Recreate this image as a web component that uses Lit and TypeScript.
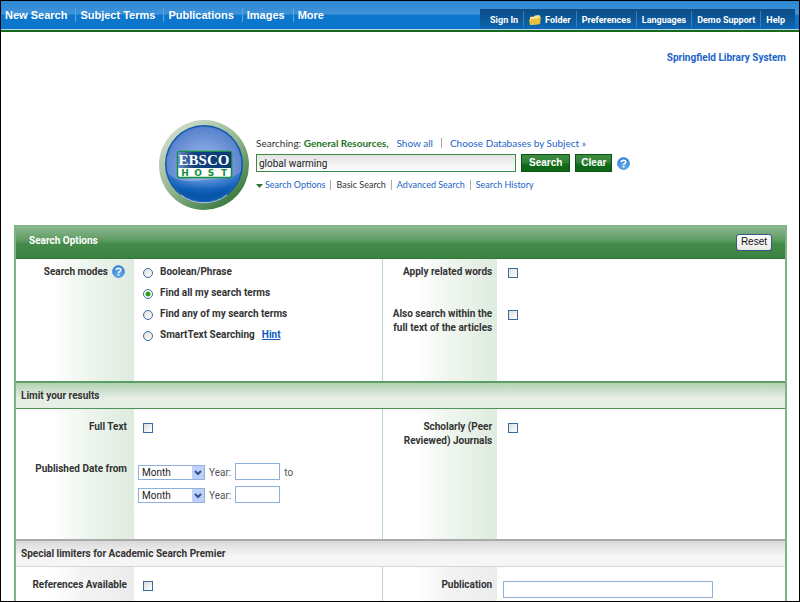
import { LitElement, html, css, svg } from "lit";
import { customElement, property } from "lit/decorators.js";

@customElement("help-icon")
class HelpIcon extends LitElement {
  static styles = css`
    :host { display: inline-flex; }
    svg { display: block; width: 13px; height: 13px; }
  `;
  render() {
    return html`<svg viewBox="0 0 13 13" role="img" aria-label="Help">
      <defs>
        <radialGradient id="g" cx="50%" cy="70%" r="70%">
          <stop offset="0" stop-color="#6db4f2" />
          <stop offset="1" stop-color="#2f78cf" />
        </radialGradient>
      </defs>
      <circle cx="6.5" cy="6.5" r="6" fill="url(#g)" stroke="#5a9be0" />
      <path d="M4.3 5 C4.3 2.6 8.8 2.6 8.8 4.9 C8.8 6.3 6.6 6.3 6.6 8.1" fill="none" stroke="#fff" stroke-width="1.6" />
      <rect x="5.8" y="9" width="1.6" height="1.6" fill="#fff" />
    </svg>`;
  }
}

@customElement("month-year")
class MonthYear extends LitElement {
  @property() which = "from";
  static styles = css`
    :host { display: flex; align-items: flex-end; gap: 4px; font: 10px/14px Roboto, "DejaVu Sans", sans-serif; color: #555; height: 17px; }
    .pick { position: relative; display: flex; }
    select { appearance: none; box-sizing: border-box; width: 67px; height: 15px; margin: 0; padding: 0 16px 0 3px; border: 1px solid #8fb0d8; border-radius: 0; background: #fff; color: #222; font: inherit; line-height: 13px; }
    .arrow { position: absolute; right: 1px; top: 1px; width: 12px; height: 13px; pointer-events: none; }
    input { box-sizing: border-box; width: 45px; height: 17px; margin: 0; padding: 0 2px; border: 1px solid #8fb0d8; background: #fff; font: inherit; }
    .pair { display: flex; align-items: flex-end; gap: 4px; }
  `;
  render() {
    return html`
      <span class="pick">
        <select aria-label="Month ${this.which}"><option>Month</option></select>
        <svg class="arrow" viewBox="0 0 12 13" aria-hidden="true">
          <rect width="12" height="13" rx="1" fill="#bdd0fa" />
          <path d="M3 5 L6 8 L9 5" fill="none" stroke="#33508c" stroke-width="2" />
        </svg>
      </span>
      <label class="pair">Year: <input type="text" /></label>
      <slot></slot>
    `;
  }
}

@customElement("ebsco-logo")
class EbscoLogo extends LitElement {
  static styles = css`
    :host { display: block; flex: none; }
    svg { display: block; width: 90px; height: 90px; }
    .name { font: bold 15px "Liberation Serif", serif; fill: #fff; }
    .host { font: bold 9px "DejaVu Sans", sans-serif; fill: #12913f; }
  `;
  render() {
    return html`<svg viewBox="0 0 90 90" role="img" aria-label="EBSCOhost">
      <defs>
        <linearGradient id="ring" x1="0.15" y1="0.05" x2="0.85" y2="0.95">
          <stop offset="0" stop-color="#d3dfcf" />
          <stop offset="0.5" stop-color="#93b58f" />
          <stop offset="1" stop-color="#2f7437" />
        </linearGradient>
        <radialGradient id="ball" cx="50%" cy="56%" r="56%">
          <stop offset="0" stop-color="#9fbdea" />
          <stop offset="0.55" stop-color="#7c9fdc" />
          <stop offset="1" stop-color="#5580cc" />
        </radialGradient>
        <radialGradient id="deep" cx="50%" cy="0%" r="75%">
          <stop offset="0" stop-color="#8fb2e8" />
          <stop offset="0.45" stop-color="#4f88d4" />
          <stop offset="0.8" stop-color="#1463bb" />
          <stop offset="1" stop-color="#0757ab" />
        </radialGradient>
        <linearGradient id="plate" x1="0" y1="0" x2="1" y2="0">
          <stop offset="0" stop-color="#6f90c4" />
          <stop offset="0.3" stop-color="#11407f" />
          <stop offset="1" stop-color="#0b3975" />
        </linearGradient>
      </defs>
      <circle cx="45" cy="45" r="45" fill="url(#ring)" />
      <circle cx="45" cy="44" r="39" fill="#0d57ab" />
      <circle cx="45" cy="44" r="37.500" fill="url(#ball)" />
      <path d="M8.500 53 C18 62 30 62 44 60 C60 58 74 60 81.500 52 A37.500 37.500 0 0 1 8.500 53 Z" fill="url(#deep)" />
      <path d="M22 75 A38 38 0 0 0 68 75" fill="none" stroke="#a9c6ec" />
      <rect x="18.500" y="31.500" width="54" height="26" rx="2" fill="#fff" stroke="#12913f" stroke-width="1.500" />
      <rect x="19" y="32" width="53" height="16" fill="url(#plate)" />
      <text class="name" x="45" y="45" text-anchor="middle">EBSCO</text>
      ${["H", "O", "S", "T"].map(
        (c, i) => svg`<text class="host" x=${26 + i * 13} y="56" text-anchor="middle">${c}</text>`,
      )}
    </svg>`;
  }
}

@customElement("app-root")
class AppRoot extends LitElement {
  static styles = css`
    :host {
      display: flex; flex-direction: column; box-sizing: border-box; height: 100vh; overflow: hidden;
      border: 1px solid #000; background: #fff; color: #333;
      font: 10px/14px Roboto, "DejaVu Sans", sans-serif;
    }
    a { color: #1c64c8; text-decoration: none; }
    input, button { margin: 0; }

    .top { flex: none; display: flex; justify-content: space-between; height: 28px; border-bottom: 1px solid #b9d5ea; box-shadow: 0 2px 0 #146a1a; background: linear-gradient(#2d86d2 0, #3f94da 13px, #0d76cd 14px, #0b74cb 100%); }
    .menu, .tools { display: flex; align-items: center; margin: 0; padding: 0; list-style: none; }
    .menu { height: 28px; font: bold 11px/14px "Liberation Sans", Arial, sans-serif; }
    .menu li { padding: 0 8px 0 4px; border-left: 1px solid #5ba5de; }
    .menu li:first-child, .tools li:first-child { border-left: 0; }
    .menu a, .tools a { color: #fff; }
    .tools { align-self: flex-end; height: 20px; margin-right: 4px; padding: 0 5px; background: linear-gradient(#0a4c86, #0c5a9c 60%, #1068b4); font-size: 9px; font-weight: bold; }
    .tools li { padding: 2px 5px 0; border-left: 1px solid #3a7db8; }
    .tools a { display: flex; align-items: center; gap: 4px; }
    .folder { width: 12px; height: 10px; }

    .org { flex: none; display: flex; justify-content: flex-end; padding: 21px 13px 0; font-weight: bold; }
    .finder { flex: none; display: flex; gap: 7px; padding: 55px 0 0 158px; }
    .form { padding-top: 16px; }
    .line { display: flex; align-items: center; font-family: Lato, Roboto, sans-serif; }
    .line > * + * { margin-left: 8px; }
    .bar { width: 1px; height: 10px; background: #aaa; }
    .source { color: #1d7422; font-weight: bold; }
    .query { display: flex; align-items: center; gap: 5px; padding-top: 4px; }
    .query input { box-sizing: border-box; width: 260px; height: 18px; padding: 0 2px; border: 1px solid #3d8a45; border-radius: 0; background: linear-gradient(#e2e2e2, #fff); color: #222; font: inherit; }
    .green { height: 18px; padding: 0 7px; border: 1px solid #0a5410; border-radius: 0; background: linear-gradient(#3f8c45 0, #2c7f33 8px, #0f6d18 9px, #0d6416 100%); color: #fff; font: bold 10px/14px "Liberation Sans", Arial, sans-serif; }
    .green.clear { padding: 0 5px; }
    .modes { padding-top: 6px; font-size: 9px; }
    .line.modes > * + * { margin-left: 5px; }
    .caret { width: 7px; height: 4px; margin-right: 2px; }
    .current { color: #333; }

    .panel { flex: 1 0 auto; display: flex; flex-direction: column; margin: 15px 12px 0 13px; border: solid #7db483; border-width: 1px 2px 0; font-weight: bold; }
    h1, h2 { margin: 0; font: inherit; }
    h1 { padding-bottom: 3px; }
    .title { display: flex; align-items: center; justify-content: space-between; height: 32px; padding: 0 13px; border-bottom: 1px solid #2c7a35; background: linear-gradient(#8fba92 0, #5e9b62 14px, #448b4a 18px, #3c8343 100%); color: #fff; }
    .reset { height: 17px; padding: 0 4px; border: 1px solid #34588e; border-radius: 3px; background: linear-gradient(#fff, #ecebe5); color: #111; font: 10px/14px "Liberation Sans", Arial, sans-serif; }
    .sub { height: 25px; padding-left: 5px; border: solid #4e9457; border-width: 2px 0 1px; border-top-color: #5c9f64; background: linear-gradient(#b2d2b4, #e6eee6 60%); line-height: 26px; }
    .sub.gray { border-color: #aaa #ccc #d5d5d5; background: linear-gradient(#d9d9d9, #f6f6f6 60%); }
    .pair { display: grid; grid-template-columns: 10fr 11fr; }
    .fill { flex: 1; }
    .half { display: grid; grid-template-columns: 118px 1fr; grid-auto-rows: max-content; row-gap: 28px; padding: 6px 0 39px; background: linear-gradient(90deg, #fff 30%, #eff6ef 58%, #deebdf) no-repeat 0 0 / 118px 100%; }
    .half.right { grid-template-columns: 114px 1fr; background-size: 114px 100%; border-left: 1px solid #b9dcbb; }
    .limits .half { padding: 11px 0 36px; }
    .fill .half { padding: 11px 0 0; background-image: linear-gradient(90deg, #fff 30%, #f3f3f3 58%, #ececec); }
    .fill .half.right { border-left-color: #ccc; }
    .name { display: flex; justify-content: flex-end; align-items: flex-start; gap: 4px; padding-right: 7px; text-align: right; }
    .right .name { padding-right: 5px; white-space: nowrap; }
    .name.helped { padding-right: 9px; }
    .field { display: flex; align-items: flex-start; padding: 3px 0 0 9px; }
    .right .field { padding-left: 11px; }
    .choices { display: grid; gap: 7px; padding: 0 0 0 9px; }
    .choice { display: flex; gap: 7px; }
    .dates { display: grid; gap: 6px; padding: 1px 0 0 4px; }
    input[type="radio"], input[type="checkbox"] { appearance: none; box-sizing: border-box; flex: none; width: 10px; height: 10px; border: 1px solid #3d6a9c; background: linear-gradient(135deg, #ddd, #fff); }
    input[type="radio"] { border-radius: 50%; margin-top: 3px; }
    input[type="radio"]:checked { background: radial-gradient(circle, #21a121 0 2px, #fff 3px); }
    .hint { color: #0b57c4; text-decoration: underline; }
    .right .field.wide { padding: 3px 0 0 6px; }
    .wide input { box-sizing: border-box; width: 210px; height: 17px; border: 1px solid #8fb0d8; }
  `;

  private modes = ["Boolean/Phrase", "Find all my search terms", "Find any of my search terms", "SmartText Searching"];

  render() {
    return html`
      <nav class="top">
        <ul class="menu">
          ${["New Search", "Subject Terms", "Publications", "Images", "More"].map((t) => html`<li><a href="#">${t}</a></li>`)}
        </ul>
        <ul class="tools">
          ${["Sign In", "Folder", "Preferences", "Languages", "Demo Support", "Help"].map(
            (t) => html`<li><a href="#">${t === "Folder" ? this.folder() : ""}${t}</a></li>`,
          )}
        </ul>
      </nav>
      <div class="org"><a href="#">Springfield Library System</a></div>
      <section class="finder">
        <ebsco-logo></ebsco-logo>
        <div class="form">
          <div class="line scope">
            <span>Searching: <span class="source">General Resources,</span></span>
            <a href="#">Show all</a><span class="bar"></span>
            <a href="#">Choose Databases by Subject »</a>
          </div>
          <div class="query">
            <input type="text" aria-label="Search terms" value="global warming" />
            <button class="green">Search</button>
            <button class="green clear">Clear</button>
            <help-icon></help-icon>
          </div>
          <div class="line modes">
            <a href="#"><svg class="caret" viewBox="0 0 7 4" aria-hidden="true"><path d="M0 0 H7 L3.5 4 Z" fill="#2f7437" /></svg>Search Options</a>
            <span class="bar"></span><span class="current">Basic Search</span>
            <span class="bar"></span><a href="#">Advanced Search</a>
            <span class="bar"></span><a href="#">Search History</a>
          </div>
        </div>
      </section>
      <main class="panel">
        <header class="title"><h1>Search Options</h1><button class="reset">Reset</button></header>
        <div class="pair">
          <div class="half">
            <div class="name helped" id="modes">Search modes <help-icon></help-icon></div>
            <div class="choices" role="radiogroup" aria-labelledby="modes">
              ${this.modes.map(
                (m, i) => html`<div class="choice">
                  <input type="radio" name="mode" id="mode${i}" ?checked=${i === 1} />
                  <label for="mode${i}">${m}</label>${i === 3 ? html`<a class="hint" href="#">Hint</a>` : ""}
                </div>`,
              )}
            </div>
          </div>
          <div class="half right">
            ${this.check("related", html`Apply related words`)}
            ${this.check("within", html`Also search within the<br />full text of the articles`)}
          </div>
        </div>
        <h2 class="sub">Limit your results</h2>
        <div class="pair limits">
          <div class="half">
            ${this.check("full", html`Full Text`)}
            <div class="name">Published Date from</div>
            <div class="dates"><month-year which="from">to</month-year><month-year which="to"></month-year></div>
          </div>
          <div class="half right">${this.check("peer", html`Scholarly (Peer<br />Reviewed) Journals`)}</div>
        </div>
        <h2 class="sub gray">Special limiters for Academic Search Premier</h2>
        <div class="pair fill">
          <div class="half">${this.check("refs", html`References Available`)}</div>
          <div class="half right">
            <label class="name" for="pub">Publication</label>
            <div class="field wide"><input type="text" id="pub" /></div>
          </div>
        </div>
      </main>
    `;
  }

  private check(id: string, text: unknown) {
    return html`<label class="name" for=${id}><span>${text}</span></label>
      <div class="field"><input type="checkbox" id=${id} /></div>`;
  }

  private folder() {
    return html`<svg class="folder" viewBox="0 0 12 10" aria-hidden="true">
      <path d="M1 2 L5 1.500 L6 0.500 L10 0 L11 1 V9 L1 10 Z" fill="#f7e596" />
      <path d="M0 4.500 L8 3.500 L12 1.500 L11 9 L1 10 Z" fill="#e8c040" />
    </svg>`;
  }
}
